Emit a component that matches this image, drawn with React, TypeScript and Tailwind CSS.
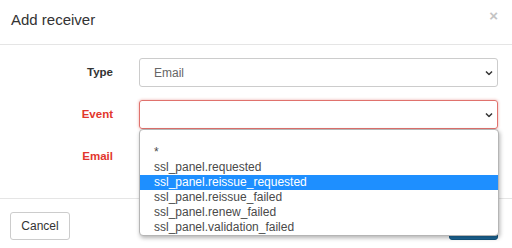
import React from 'react';

const options = [
  '',
  '*',
  'ssl_panel.requested',
  'ssl_panel.reissue_requested',
  'ssl_panel.reissue_failed',
  'ssl_panel.renew_failed',
  'ssl_panel.validation_failed',
];

const Chevron: React.FC = () => (
  <svg width="8" height="5" viewBox="0 0 8 5" className="absolute right-[4px] top-1/2 -translate-y-1/2">
    <path d="M1 1l3 3 3-3" fill="none" stroke="#333" strokeWidth="1.5" />
  </svg>
);

const App: React.FC = () => {
  const selected = 'ssl_panel.reissue_requested';

  return (
    <div className="w-[512px] h-[248px] bg-white overflow-hidden font-['Liberation_Sans',Arial,sans-serif] text-[#333]">
      {/* Header */}
      <div className="h-[45px] flex items-center justify-between pl-[11px] pr-[14px] border-b border-[#e5e5e5]">
        <h4 className="text-[15px] leading-none text-[#333] -mt-[6px]">Add receiver</h4>
        <span className="text-[15px] font-bold leading-none text-[#c4c4c4] -mt-[14px]">×</span>
      </div>

      {/* Body */}
      <div className="h-[153px] pt-[13px] pr-[14px] flex flex-col gap-[13px]">
        <div className="flex items-center">
          <label className="w-[113px] text-right text-[11.5px] font-bold text-[#333]">Type</label>
          <div className="relative ml-[26px] flex-1 h-[29px] border border-[#ccc] rounded-[3px] flex items-center pl-[14px] text-[12px] text-[#666]">
            Email
            <Chevron />
          </div>
        </div>

        <div className="flex items-center">
          <label className="w-[113px] text-right text-[11.5px] font-bold text-[#e2362d]">Event</label>
          <div className="relative ml-[26px] flex-1 h-[29px] border border-[#e0726d] rounded-[3px] shadow-[0_0_3px_rgba(210,60,50,0.45)]">
            <Chevron />
            {/* Open option list */}
            <div className="absolute top-full left-[-1px] right-[-2px] mt-[1px] bg-white border border-[#b5b5b5] rounded-[4px] shadow-[1px_2px_4px_rgba(0,0,0,0.3)] z-10 overflow-hidden">
              {options.map((o, i) => (
                <div
                  key={i}
                  className={
                    'h-[15px] leading-[15px] pl-[14px] text-[12px] whitespace-nowrap ' +
                    (o === selected ? 'bg-[#1e8fff] text-white' : 'text-[#4a4a4a]')
                  }
                >
                  {o}
                </div>
              ))}
            </div>
          </div>
        </div>

        <div className="flex items-center">
          <label className="w-[113px] text-right text-[11.5px] font-bold text-[#e2362d]">Email</label>
          <div className="ml-[26px] flex-1 h-[29px] border border-[#e0726d] rounded-[3px]" />
        </div>
      </div>

      {/* Footer */}
      <div className="border-t border-[#e5e5e5] pt-[13px] px-[10px] pr-[14px] flex justify-between">
        <button className="w-[60px] h-[28px] border border-[#ccc] rounded-[3px] bg-white text-[12px] text-[#333]">
          Cancel
        </button>
        <button className="w-[49px] h-[28px] border border-[#15567f] rounded-[3px] bg-[#1d6a9c] text-[12px] text-white">
          Save
        </button>
      </div>
    </div>
  );
};

export default App;
